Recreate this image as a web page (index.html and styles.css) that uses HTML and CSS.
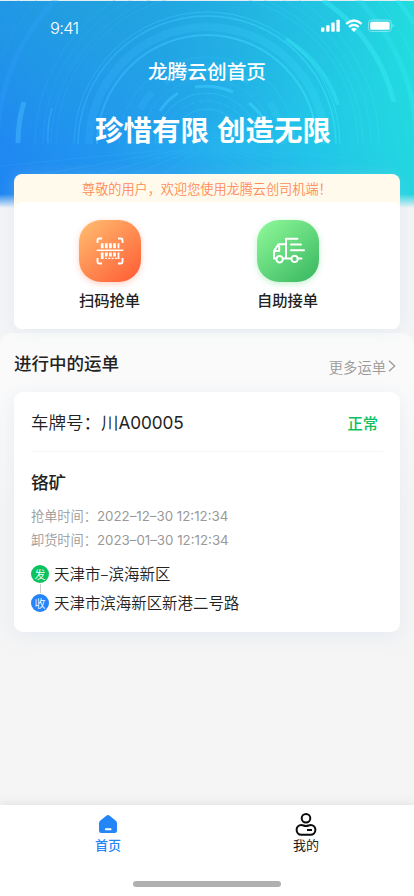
FILE: index.html
```html
<!DOCTYPE html>
<html lang="zh-CN">
<head>
<meta charset="utf-8">
<meta name="viewport" content="width=device-width, initial-scale=1">
<title>龙腾云创首页</title>
<link rel="stylesheet" href="styles.css">
</head>
<body>
<div class="app">
  <header class="hero">
    <svg class="hero-art" viewBox="0 0 414 208" fill="none">
      <defs>
        <clipPath id="sky"><rect width="414" height="144"/></clipPath>
        <linearGradient id="ring" gradientUnits="userSpaceOnUse" x1="0" y1="0" x2="414" y2="0"><stop stop-color="#2f9cff"/><stop offset=".5" stop-color="#36c2f8"/><stop offset="1" stop-color="#36eef4"/></linearGradient>
        <radialGradient id="glow"><stop stop-color="#2cc4f4" stop-opacity=".3"/><stop offset="1" stop-color="#2cc4f4" stop-opacity="0"/></radialGradient>
      </defs>
      <g clip-path="url(#sky)" stroke="url(#ring)">
        <circle cx="207" cy="145" r="36" stroke-width="1" opacity=".5"/>
        <circle cx="207" cy="145" r="44" stroke-width="1" opacity=".4" stroke-dasharray="6 3"/>
        <circle cx="207" cy="145" r="52" stroke-width="1" opacity=".5"/>
        <path d="M160 111q7-11 18-18M195 87q20-3 38 5M249 103q10 8 14 16" stroke-width="3" opacity=".75"/>
        <circle cx="207" cy="145" r="66" stroke-width="1" opacity=".25"/>
        <circle cx="207" cy="145" r="76" stroke-width="7" opacity=".25" stroke-dasharray="90 30 20 16"/>
        <circle cx="207" cy="145" r="88" stroke-width="1" opacity=".3"/>
        <circle cx="207" cy="145" r="110" stroke-width="2" opacity=".75"/>
        <circle cx="207" cy="145" r="118" stroke-width="8" opacity=".3"/>
        <circle cx="207" cy="145" r="129" stroke-width="1.500" opacity=".7"/>
        <circle cx="207" cy="145" r="133" stroke-width="1" opacity=".7"/>
        <circle cx="207" cy="145" r="151" stroke-width="1" opacity=".3"/>
        <circle cx="207" cy="145" r="156" stroke-width="1" opacity=".3"/>
        <circle cx="207" cy="145" r="164" stroke-width="1" opacity=".25"/>
        <circle cx="207" cy="145" r="172" stroke-width="1" opacity=".35"/>
        <circle cx="207" cy="145" r="210" stroke-width="5" opacity=".3"/>
        <circle cx="207" cy="145" r="224" stroke-width="1" opacity=".3"/>
        <circle cx="207" cy="145" r="238" stroke-width="1" opacity=".3"/>
        <path d="M18 143q0-22 6-41" stroke="#4cbcff" stroke-width="5" opacity=".45"/>
        <path d="M48 143q-1-20 4-35" stroke="#4cbcff" stroke-width="1.500" opacity=".4"/>
      </g>
      <g stroke="#38e8f4">
        <path d="M323 0q55 38 71 102" stroke-width="5" opacity=".5"/>
        <path d="M286 39q40 26 52 66" stroke-width="4" opacity=".4"/>
        <path d="M397 0q12 13 17 24" stroke-width="4" opacity=".4"/>
      </g>
      <ellipse cx="215" cy="146" rx="110" ry="30" fill="url(#glow)"/>
      <path d="M180 150L20 178M187 150L60 185M194 150L105 185M201 150L145 185M213 150L265 185M220 150L310 185M227 150L350 185M234 150L405 180M165 150L0 166M250 150L414 164" stroke="#4fd0ff" stroke-width="1" opacity=".14"/>
    </svg>
    <div class="statusbar">
      <span class="clock">9:41</span>
      <svg class="signals" width="74" height="14" viewBox="0 0 74 14" fill="#fff">
        <rect x="0" y="8.5" width="3.4" height="4.2" rx=".8"/><rect x="5.2" y="6.2" width="3.4" height="6.5" rx=".8"/><rect x="10.3" y="3.5" width="3.4" height="9.2" rx=".8"/><rect x="15.4" y=".8" width="3.4" height="11.9" rx=".8"/>
        <g fill="none" stroke="#fff" stroke-width="2.2"><path d="M25.2 4.8q7.7-6.6 15.4 0M28 8q4.900-4.200 9.800 0"/></g>
        <path d="M30 10q2.900-2.200 5.800 0L32.900 12.900z"/>
        <rect x="47.500" y="1" width="22.800" height="11.500" rx="3" fill="none" stroke="#fff" stroke-opacity=".4"/>
        <rect x="49.200" y="2.700" width="19.400" height="8.100" rx="1.500"/><path d="M71.600 4.800q2.300 1.900 0 3.900z" opacity=".5"/>
      </svg>
    </div>
    <h1 class="title">龙腾云创首页</h1>
    <p class="slogan">珍惜有限 创造无限</p>
  </header>

  <section class="welcome">
    <p class="notice">尊敬的用户，欢迎您使用龙腾云创司机端！</p>
    <div class="actions">
      <a class="action">
        <span class="tile tile-scan">
          <svg width="28" height="28" viewBox="0 0 28 28" fill="none" stroke="#fff" stroke-width="1.900">
            <path d="M1.500 6V3Q1.500 1.500 3 1.500H6M22 1.500h3Q26.500 1.500 26.500 3V6M1.500 21v4Q1.500 26.500 3 26.500H6M22 26.500h3Q26.500 26.500 26.500 25V21"/>
            <path d="M.7 13.300H27.300" stroke-width="1.500"/>
            <path d="M6.200 6.300v5M10.300 6.300v5M14.400 6.300v5M18.500 6.300v5M6.200 15.500v6.500M10.300 15.500v4M14.400 15.500v4M18.500 15.500v4" stroke-width="2.700"/>
            <path d="M22.500 6.300v5M22.500 15.500v6.500" stroke-width="1.800"/>
            <path d="M9 21.400h12" stroke-width="1.300" stroke-dasharray="2 1.300"/>
          </svg>
        </span>
        <span class="action-name">扫码抢单</span>
      </a>
      <a class="action">
        <span class="tile tile-truck">
          <svg width="34" height="28" viewBox="0 0 34 28" fill="none" stroke="#fff" stroke-width="2" stroke-linecap="round" stroke-linejoin="round">
            <path d="M26.500 1.800H15V21.500M15 7.300H8.200Q7.200 7.300 6.700 8.200L3 14V21.500H5M3 14H8.200V9.500M12 21.500H20M26.500 21.500H30.500M20 7.500H30M20 13.200H33"/>
            <circle cx="8.600" cy="22.300" r="3.200"/><circle cx="23.600" cy="21.900" r="3.200"/>
          </svg>
        </span>
        <span class="action-name">自助接单</span>
      </a>
    </div>
  </section>

  <main class="orders">
    <div class="orders-head">
      <h2>进行中的运单</h2>
      <a class="more">更多运单<svg width="8" height="12" viewBox="0 0 8 12" fill="none" stroke="#999" stroke-width="1.200"><path d="M1 .8L6.700 6 1 11.200"/></svg></a>
    </div>
    <article class="order">
      <div class="plate-row">
        <span class="plate">车牌号：川<span class="plate-no">A00005</span></span>
        <span class="state">正常</span>
      </div>
      <h3>铬矿</h3>
      <p class="time">抢单时间：<span>2022–12–30 12:12:34</span></p>
      <p class="time">卸货时间：<span>2023–01–30 12:12:34</span></p>
      <div class="route">
        <div class="stop"><i class="dot dot-from">发</i><span class="place">天津市–滨海新区</span></div>
        <div class="link"></div>
        <div class="stop"><i class="dot dot-to">收</i><span class="place">天津市滨海新区新港二号路</span></div>
      </div>
    </article>
  </main>

  <nav class="tabbar">
    <div class="tabs">
      <a class="tab tab-on">
        <svg width="22" height="24" viewBox="0 0 22 24"><path d="M9.300 2.800Q11 1.400 12.700 2.800L18.600 7.500Q20 8.600 20 10.500V17.800Q20 20.100 17.700 20.100H4.300Q2 20.100 2 17.800V10.500Q2 8.600 3.400 7.500z" fill="#2385f7"/><rect x="8" y="15.300" width="6.500" height="2" rx=".7" fill="#fff"/></svg>
        <span>首页</span>
      </a>
      <a class="tab">
        <svg width="22" height="24" viewBox="0 0 22 24" fill="none" stroke="#0b0b0b" stroke-width="2"><circle cx="11" cy="5.300" r="4.300"/><path d="M6.500 12C8 12 9 13 11 13S14 12 15.500 12C18.500 12 20.400 14.200 20.400 16.800S18.500 21.800 15.500 21.800H6.500C3.500 21.800 1.600 19.400 1.600 16.800S3.500 12 6.500 12zM12 16.900h5"/></svg>
        <span>我的</span>
      </a>
    </div>
    <div class="home-bar"></div>
  </nav>
</div>
</body>
</html>
```
FILE: styles.css
```css
* { box-sizing: border-box; margin: 0; padding: 0; }

body {
  font-family: "Noto Sans CJK SC", sans-serif;
  color: #222;
  background: #f5f5f5;
}

.app {
  display: flex;
  flex-direction: column;
  width: 414px;
  height: 896px;
  overflow: hidden;
  background: #f3f4f6;
}

.hero {
  position: relative;
  height: 208px;
  flex: none;
  margin-bottom: -34px;
  border-top: 1px solid #e4eef2;
  color: #fff;
  background:
    linear-gradient(to bottom, transparent 193px, #f3f4f6 207px),
    linear-gradient(to bottom, rgba(34, 160, 212, .6), rgba(34, 160, 212, 0) 75%) 0 0 / 260px 100% no-repeat,
    linear-gradient(78deg, #1f86f2 0%, #22a0ee 40%, #22bfe8 68%, #22dedf 100%);
  background:
    linear-gradient(to bottom, transparent 193px, #f3f4f6 207px),
    radial-gradient(ellipse 330px 150px at 100px 0, rgba(34, 165, 212, .6), rgba(34, 165, 212, 0)),
    linear-gradient(78deg, #1f86f2 0%, #22a0ee 40%, #22c4e8 70%, #22dede 100%);
}

.hero-art { position: absolute; top: -1px; left: 0; width: 414px; height: 208px; }

.statusbar {
  position: relative;
  display: flex;
  justify-content: space-between;
  padding: 17px 19px 0 50px;
  height: 55px;
}
.clock { margin-top: -1px; font: 300 16.500px/22px Inter, sans-serif; letter-spacing: -.7px; }
.signals { margin-top: 1px; }

.title {
  position: relative;
  font-size: 19.700px;
  line-height: 30px;
  font-weight: 500;
  text-align: center;
}

.slogan {
  position: relative;
  margin-top: 22px;
  padding-left: 95px;
  font-size: 28.500px;
  line-height: 42px;
  font-weight: 700;
  white-space: nowrap;
  word-spacing: 1.500px;
}

.welcome {
  position: relative;
  flex: none;
  width: 386px;
  height: 155px;
  margin: 0 auto 4px;
  border-radius: 8px;
  background: #fffaec;
  box-shadow: 0 2px 16px rgba(190, 210, 235, .25);
}
.notice {
  height: 28px;
  padding-left: 68px;
  font-size: 13.150px;
  line-height: 29px;
  font-weight: 350;
  color: #ff8a57;
  white-space: nowrap;
}
.actions {
  display: flex;
  gap: 116px;
  height: 127px;
  padding: 18px 0 0 65px;
  border-radius: 8px;
  background: #fff;
}
.action { display: flex; flex-direction: column; align-items: center; width: 62px; }
.tile {
  display: flex;
  align-items: center;
  justify-content: center;
  width: 62px;
  height: 62px;
  border-radius: 22px;
}
.tile-scan { background: linear-gradient(140deg, #ffb76d 8%, #ff6238 92%); box-shadow: 0 2px 6px rgba(255, 107, 62, .3); }
.tile-truck { background: linear-gradient(140deg, #8cf797 5%, #3bb962 95%); box-shadow: 0 2px 6px rgba(70, 210, 110, .3); }
.action-name { margin: 5px 1px 0 0; font-size: 15.300px; line-height: 24px; font-weight: 500; white-space: nowrap; }

.orders {
  flex: 1;
  padding: 0 14px;
  border-radius: 12px 12px 0 0;
  background: linear-gradient(#fafafa, #fafafa 60px, #f5f5f5 180px);
}
.orders-head { display: flex; justify-content: space-between; height: 59px; padding-top: 16px; }
.orders-head h2 { font-size: 17.500px; line-height: 28px; font-weight: 500; }
.more {
  display: flex;
  align-items: center;
  gap: 2px;
  height: 24px;
  margin: 5px 4px 0 0;
  font-size: 14.300px;
  font-weight: 350;
  color: #999;
}

.order {
  height: 240px;
  padding: 0 17px;
  border-radius: 9px;
  background: #fff;
  box-shadow: 0 4px 20px rgba(190, 210, 235, .28);
}
.plate-row {
  display: flex;
  align-items: center;
  justify-content: space-between;
  height: 60px;
  padding: 0 5px 0 0;
  border-bottom: 1px solid #f5f5f5;
}
.plate { font-size: 17.500px; font-weight: 350; }
.plate-no { font: 400 17.200px Inter, sans-serif; letter-spacing: -.1px; }
.state { margin-top: 1px; font-size: 15.300px; font-weight: 500; color: #0cc160; }
.order h3 { margin: 16px 0 8px; font-size: 17.500px; line-height: 28px; font-weight: 500; }
.time { font-size: 13.200px; line-height: 23px; color: #999; font-weight: 350; white-space: nowrap; }
.time span { font-family: Inter, sans-serif; font-size: 13.300px; font-weight: 400; }

.route { margin-top: 14px; }
.stop { display: flex; align-items: center; gap: 5px; height: 18px; font-size: 15.450px; font-weight: 350; white-space: nowrap; }
.place { margin-top: -3px; }
.dot {
  display: flex;
  align-items: center;
  justify-content: center;
  width: 18px;
  height: 18px;
  border-radius: 50%;
  font-size: 11px;
  font-style: normal;
  color: #fff;
}
.dot-from { background: #0cc160; }
.dot-to { background: #2385f7; }
.link { width: 1px; height: 9px; margin: 1px 0 1px 9px; background: #ccc; }
.order .route { margin-top: 13px; }

.tabbar {
  position: relative;
  flex: none;
  height: 91px;
  background: #fff;
  box-shadow: 0 -2px 10px rgba(0, 0, 0, .08);
}
.tabs { display: flex; justify-content: space-between; padding: 8px 97px 0; }
.tab { display: flex; flex-direction: column; align-items: center; width: 22px; font-size: 13px; line-height: 18px; white-space: nowrap; }
.tab span { margin-top: -1px; }
.tab-on { color: #2385f7; font-weight: 500; }
.home-bar { width: 148px; height: 6px; margin: 27px auto 0; border-radius: 3px; background: #b0b0b0; }
```
